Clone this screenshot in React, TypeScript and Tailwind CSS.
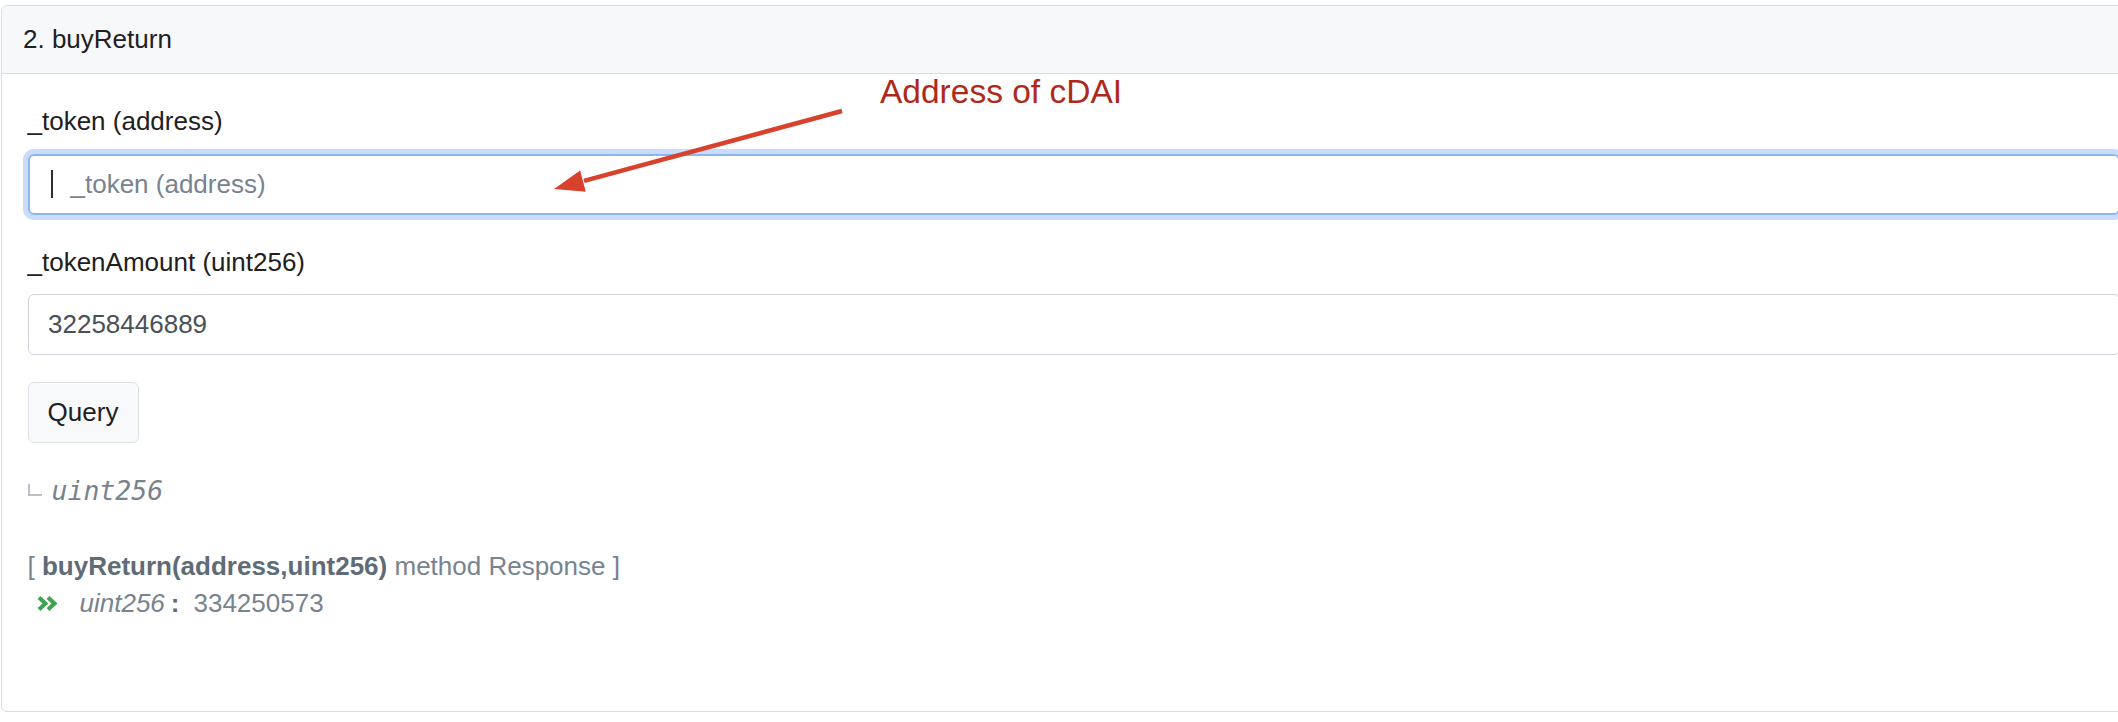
export default function App() {
  return (
    <div className="relative w-[2118px] h-[722px] overflow-hidden bg-white font-['Liberation_Sans',Arial,sans-serif]">
      <div className="pt-[5px] pl-[1px]">
        <div className="w-[2160px] h-[707px] border-[1.5px] border-[#dcdee2] rounded-[6px] overflow-hidden">
          <div className="h-[68px] bg-[#f7f8fa] border-b-[1.5px] border-[#dcdee2] flex items-center pl-[21px] text-[26px] text-[#1e2022]">
            2. buyReturn
          </div>
          <div className="pl-[25.5px] pt-[28px] pr-[40px]">
            <div className="text-[26px] leading-[39px] text-[#1e2022]">_token (address)</div>
            <div className="mt-[12.5px] h-[61px] border-2 border-[#8bb6f1] rounded-[6px] shadow-[0_0_0_5px_#cadcfc] flex items-center">
              <span className="ml-[21px] w-[2px] h-[28px] bg-[#2a2d31]"></span>
              <span className="ml-[18px] text-[26px] text-[#77838f]">_token (address)</span>
            </div>

            <div className="mt-[28px] text-[26px] leading-[39px] text-[#1e2022]">_tokenAmount (uint256)</div>
            <div className="mt-[12px] h-[61px] border-[1.5px] border-[#ced4da] rounded-[6px] flex items-center pl-[19.5px] text-[26px] text-[#495057]">
              32258446889
            </div>

            <div className="mt-[27px] w-[111px] h-[61px] border-[1.5px] border-[#dee2e6] bg-[#f8f9fa] rounded-[6px] flex items-center justify-center text-[26px] text-[#1e2022]">
              Query
            </div>

            <div className="mt-[28px] h-[39px] flex items-center">
              <span className="w-[14px] h-[12px] border-l-2 border-b-2 border-[#b9c0c7]"></span>
              <span className="ml-[10px] font-['DejaVu_Sans_Mono',monospace] italic text-[26.5px] leading-[39px] text-[#77838f]">uint256</span>
            </div>

            <div className="mt-[38px] text-[26px] leading-[37px] text-[#77838f]">
              [ <strong className="font-bold text-[#5f6b76]">buyReturn(address,uint256)</strong> method Response ]
            </div>
            <div className="h-[37px] flex items-center text-[26px] text-[#77838f]">
              <svg className="ml-[9px]" width="20" height="15" viewBox="0 0 20 15">
                <polyline points="2,1.5 8.5,7.5 2,13.5" fill="none" stroke="#3fa34d" strokeWidth="4" strokeLinejoin="miter" />
                <polyline points="11,1.5 17.5,7.5 11,13.5" fill="none" stroke="#3fa34d" strokeWidth="4" strokeLinejoin="miter" />
              </svg>
              <span className="ml-[23px] italic">uint256</span>
              <span className="ml-[6px] font-bold text-[#5f6b76]">:</span>
              <span className="ml-[14px]">334250573</span>
            </div>
          </div>
        </div>
      </div>

      <div className="absolute left-[880px] top-[75px] text-[33.5px] leading-[33px] text-[#ad2a1b] whitespace-nowrap">
        Address of cDAI
      </div>
      <svg className="absolute left-0 top-0 pointer-events-none" width="2118" height="722" viewBox="0 0 2118 722">
        <line x1="842" y1="111" x2="584" y2="180.8" stroke="#d8412b" strokeWidth="4.5" />
        <polygon points="554,189 585.8,191.8 580.1,170.5" fill="#d8412b" />
      </svg>
    </div>
  );
}
